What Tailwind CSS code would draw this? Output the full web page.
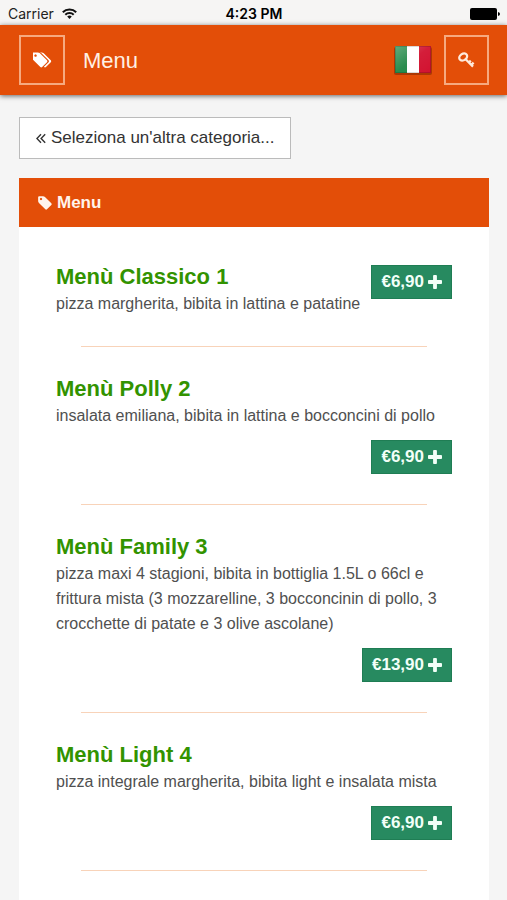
<!DOCTYPE html>
<html lang="it">
<head>
  <meta charset="UTF-8">
  <meta name="viewport" content="width=device-width, initial-scale=1.0">
  <title>Menu</title>
  <script src="https://cdn.jsdelivr.net/npm/@tailwindcss/browser@4"></script>
</head>
<body class="bg-[#f5f5f5] font-['Liberation_Sans',Arial,sans-serif] text-[#333]">

  <!-- Icone condivise -->
  <svg class="hidden" aria-hidden="true">
    <symbol id="icon-tag" viewBox="0 0 1792 1792">
      <path d="M576 448q0-53-37.5-90.5t-90.5-37.5-90.5 37.5-37.5 90.5 37.5 90.5 90.5 37.5 90.5-37.5 37.5-90.5zm1067 576q0 53-37 90l-491 492q-39 37-91 37-53 0-90-37l-715-716q-38-37-64.5-101t-26.5-117v-416q0-52 38-90t90-38h416q53 0 117 26.5t102 64.5l715 714q37 39 37 91z"/>
    </symbol>
    <symbol id="icon-tags" viewBox="0 0 1920 1792">
      <path d="M384 448q0-53-37.5-90.5t-90.5-37.5-90.5 37.5-37.5 90.5 37.5 90.5 90.5 37.5 90.5-37.5 37.5-90.5zm1067 576q0 53-37 90l-491 492q-39 37-91 37-53 0-90-37l-715-716q-38-37-64.5-101t-26.5-117v-416q0-52 38-90t90-38h416q53 0 117 26.5t102 64.5l715 714q37 39 37 91zm384 0q0 53-37 90l-491 492q-39 37-91 37-36 0-59-14t-53-45l470-470q37-37 37-90 0-52-37-91l-715-714q-38-38-102-64.5t-117-26.5h224q53 0 117 26.5t102 64.5l715 714q37 39 37 91z"/>
    </symbol>
    <symbol id="icon-plus" viewBox="192 128 1408 1408">
      <path d="M1600 736v192q0 40-28 68t-68 28h-416v416q0 40-28 68t-68 28h-192q-40 0-68-28t-28-68v-416h-416q-40 0-68-28t-28-68v-192q0-40 28-68t68-28h416v-416q0-40 28-68t68-28h192q40 0 68 28t28 68v416h416q40 0 68 28t28 68z"/>
    </symbol>
  </svg>

  <!-- Barra di stato -->
  <div class="grid h-[25px] grid-cols-3 items-center bg-[#f6f5f4] pt-0.5 pr-[7px] pl-2 font-[Inter,sans-serif] text-sm text-[#222]">
    <div class="flex items-center gap-2">
      <span>Carrier</span>
      <svg class="h-[11px] w-[15px]" viewBox="0 0 15 11" fill="none" stroke="#111" stroke-width="2">
        <path d="M.8 4.2a9.5 9.5 0 0 1 13.4 0M3.3 6.8a6 6 0 0 1 8.4 0"/>
        <path d="M7.5 11 5.2 8.6a3.3 3.3 0 0 1 4.6 0z" fill="#111" stroke="none"/>
      </svg>
    </div>
    <div class="text-center font-semibold text-black">4:23 PM</div>
    <svg class="h-3 w-[30px] justify-self-end" viewBox="0 0 30 12">
      <rect width="27" height="12" rx="2"/>
      <path d="M28 4q2 .5 2 2t-2 2z"/>
    </svg>
  </div>

  <!-- Header -->
  <header class="flex h-[70px] items-center bg-[#e34e08] pr-[18px] pl-[19px] shadow-[0_1px_5px_rgba(0,0,0,0.6)]">
    <button type="button" aria-label="Categorie" class="flex h-[50px] w-[46px] items-center justify-center border-2 border-[#f6aa80] text-white">
      <svg class="h-[18px] w-[19px]" fill="currentColor"><use href="#icon-tags"/></svg>
    </button>
    <h1 class="ml-[18px] text-[22px] text-[#fff0e4]">Menu</h1>
    <button type="button" aria-label="Italiano" class="ml-auto">
      <svg class="h-[30px] w-[38px]" viewBox="0 0 38 30">
        <defs>
          <linearGradient id="gloss" x1="0" y1="0" x2="1" y2="1">
            <stop offset="0" stop-color="#fff" stop-opacity=".3"/>
            <stop offset=".5" stop-color="#fff" stop-opacity=".05"/>
            <stop offset="1" stop-color="#fff" stop-opacity="0"/>
          </linearGradient>
        </defs>
        <rect y="2" width="38" height="28" rx="2" fill="#5a1800" opacity=".4"/>
        <rect x="1" y="1" width="12" height="27" fill="#1f8746"/>
        <rect x="13" y="1" width="12" height="27" fill="#fff"/>
        <rect x="25" y="1" width="12" height="27" fill="#d21230"/>
        <rect x="1" y="1" width="36" height="27" fill="url(#gloss)"/>
        <rect x="1.5" y="1.5" width="35" height="26" fill="none" stroke="#000" stroke-opacity=".15"/>
      </svg>
    </button>
    <button type="button" aria-label="Accedi" class="ml-3 flex h-[50px] w-[45px] items-center justify-center border-2 border-[#f6aa80] text-[#ffeadb]">
      <svg class="h-[17px] w-[17px]" viewBox="0 0 17 17" fill="none" stroke="currentColor" stroke-width="2.3">
        <ellipse cx="5.2" cy="5" rx="4.2" ry="3.2" transform="rotate(-35 5.2 5)"/>
        <path d="M7.4 7 15 14.6M10.6 10.8l2.2-2.2M13 13.2l2.6-2.6"/>
      </svg>
    </button>
  </header>

  <main class="pt-[22px] pr-[18px] pl-[19px]">
    <button type="button" class="flex h-[42px] items-center gap-1 border border-[#bbb] bg-white px-4 text-[17px]">
      <svg class="h-[11px] w-[11px]" viewBox="0 0 11 11" fill="none" stroke="currentColor" stroke-width="1.4">
        <path d="M5 1.2.9 5.5 5 9.8M9.2 1.2 5.1 5.5l4.1 4.3"/>
      </svg>
      Seleziona un'altra categoria...
    </button>

    <section class="mt-[19px] bg-white pb-8">
      <h2 class="flex h-[49px] items-center gap-1 bg-[#e34e08] px-[18px] text-[17px] font-bold text-[#fff4ec]">
        <svg class="h-4 w-4" fill="currentColor"><use href="#icon-tag"/></svg>
        Menu
      </h2>

      <div class="px-[37px] pt-2">
        <article>
          <div class="flex flex-wrap items-start gap-x-2 gap-y-[10px] pt-7 pb-[30px]">
            <div>
              <h3 class="text-[22px] leading-7 font-bold text-[#329300]">Menù Classico 1</h3>
              <p class="text-base leading-[25px] text-[#505050]">pizza margherita, bibita in lattina e patatine</p>
            </div>
            <button type="button" class="mt-0.5 ml-auto flex h-[34px] items-center gap-1 border border-[#1f7d54] bg-[#278a60] px-[9px] text-[17px] font-bold text-[#f2fff8]">€6,90 <svg class="h-[14px] w-[14px]" fill="currentColor"><use href="#icon-plus"/></svg></button>
          </div>
          <hr class="mx-[25px] border-[#f8d3b9]">
        </article>

        <article>
          <div class="flex flex-wrap items-start gap-x-2 gap-y-[10px] pt-7 pb-[30px]">
            <div>
              <h3 class="text-[22px] leading-7 font-bold text-[#329300]">Menù Polly 2</h3>
              <p class="text-base leading-[25px] text-[#505050]">insalata emiliana, bibita in lattina e bocconcini di pollo</p>
            </div>
            <button type="button" class="mt-0.5 ml-auto flex h-[34px] items-center gap-1 border border-[#1f7d54] bg-[#278a60] px-[9px] text-[17px] font-bold text-[#f2fff8]">€6,90 <svg class="h-[14px] w-[14px]" fill="currentColor"><use href="#icon-plus"/></svg></button>
          </div>
          <hr class="mx-[25px] border-[#f8d3b9]">
        </article>

        <article>
          <div class="flex flex-wrap items-start gap-x-2 gap-y-[10px] pt-7 pb-[30px]">
            <div>
              <h3 class="text-[22px] leading-7 font-bold text-[#329300]">Menù Family 3</h3>
              <p class="text-base leading-[25px] text-[#505050]">pizza maxi 4 stagioni, bibita in bottiglia 1.5L o 66cl e frittura mista (3 mozzarelline, 3 bocconcinin di pollo, 3 crocchette di patate e 3 olive ascolane)</p>
            </div>
            <button type="button" class="mt-0.5 ml-auto flex h-[34px] items-center gap-1 border border-[#1f7d54] bg-[#278a60] px-[9px] text-[17px] font-bold text-[#f2fff8]">€13,90 <svg class="h-[14px] w-[14px]" fill="currentColor"><use href="#icon-plus"/></svg></button>
          </div>
          <hr class="mx-[25px] border-[#f8d3b9]">
        </article>

        <article>
          <div class="flex flex-wrap items-start gap-x-2 gap-y-[10px] pt-7 pb-[30px]">
            <div>
              <h3 class="text-[22px] leading-7 font-bold text-[#329300]">Menù Light 4</h3>
              <p class="text-base leading-[25px] text-[#505050]">pizza integrale margherita, bibita light e insalata mista</p>
            </div>
            <button type="button" class="mt-0.5 ml-auto flex h-[34px] items-center gap-1 border border-[#1f7d54] bg-[#278a60] px-[9px] text-[17px] font-bold text-[#f2fff8]">€6,90 <svg class="h-[14px] w-[14px]" fill="currentColor"><use href="#icon-plus"/></svg></button>
          </div>
          <hr class="mx-[25px] border-[#f8d3b9]">
        </article>
      </div>
    </section>
  </main>

</body>
</html>
